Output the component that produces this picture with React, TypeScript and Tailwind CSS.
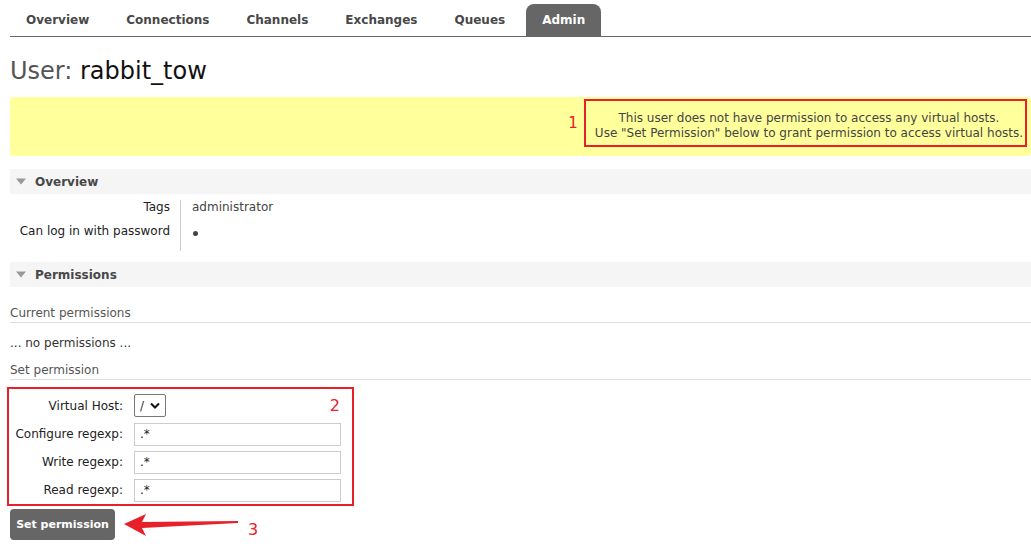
import React from 'react';

const tabs = ['Overview', 'Connections', 'Channels', 'Exchanges', 'Queues', 'Admin'];

function SectionHeader({ title }: { title: string }) {
  return (
    <div className="flex h-[25px] items-center bg-[#f5f5f5] pl-[6px]">
      <svg width="10" height="7" viewBox="0 0 10 7" className="mr-[9px]">
        <path d="M0 0.5 L10 0.5 L5 6.5 Z" fill="#999" />
      </svg>
      <span className="font-bold text-[#484848]">{title}</span>
    </div>
  );
}

function FormRow({ label, first, children }: { label: string; first?: boolean; children: React.ReactNode }) {
  return (
    <div className={`flex items-center ${first ? 'h-[29px]' : 'h-[28px]'}`}>
      <label className="w-[124px] shrink-0 whitespace-nowrap pr-[11px] text-right text-[#222]">{label}</label>
      {children}
    </div>
  );
}

export default function App() {
  return (
    <div className="min-h-screen bg-white pl-[10px] text-[12px] leading-[14px] text-[#333] font-['DejaVu_Sans',Verdana,sans-serif]">
      {/* Tabs */}
      <div className="flex border-b border-[#666] pt-[4px]">
        {tabs.map((t) => (
          <div
            key={t}
            className={`mr-[5px] flex h-[32px] items-center px-[16px] font-bold ${
              t === 'Admin' ? 'rounded-t-[8px] bg-[#666] text-white' : 'text-[#484848]'
            }`}
          >
            {t}
          </div>
        ))}
      </div>

      {/* Title */}
      <h1 className="mt-[20px] text-[24px] leading-[28px] text-[#555]">
        User: <span className="text-[#111]">rabbit_tow</span>
      </h1>

      {/* Warning */}
      <div className="mt-[12px] flex justify-end rounded-[4px] bg-[#ffff9c] pr-[4px] pt-[2px] pb-[9px]">
        <span className="mr-[6px] self-center text-[15px] text-[#e8202a]">1</span>
        <div className="border-2 border-[#e8202a] pl-[9px] pr-[2px] pt-[10px] pb-[4px] text-center leading-[15px] text-[#444]">
          This user does not have permission to access any virtual hosts.
          <br />
          Use "Set Permission" below to grant permission to access virtual hosts.
        </div>
      </div>

      {/* Overview */}
      <div className="mt-[13px]">
        <SectionHeader title="Overview" />
        <div className="mt-[6px] flex">
          <div className="w-[171px] border-r border-[#ccc] pr-[10px] text-right text-[#222]">
            <div className="h-[24px]">Tags</div>
            <div className="h-[27px]">Can log in with password</div>
          </div>
          <div className="pl-[11px] text-[#444]">
            <div className="h-[24px]">administrator</div>
            <div className="h-[27px] pt-[7px] pl-[1px]">
              <div className="h-[5px] w-[5px] rounded-full bg-[#444]" />
            </div>
          </div>
        </div>
      </div>

      {/* Permissions */}
      <div className="mt-[11px]">
        <SectionHeader title="Permissions" />
        <div className="mt-[19px] border-b border-[#ddd] pb-[2px] text-[#555]">Current permissions</div>
        <div className="mt-[13px] text-[#333]">... no permissions ...</div>
        <div className="mt-[13px] border-b border-[#ddd] pb-[2px] text-[#555]">Set permission</div>

        <div className="relative -ml-[3px] mt-[7px] w-[347px] border-2 border-[#e8202a] pl-[1px] pt-[2px]">
          <span className="absolute right-[12px] top-[8px] text-[16px] leading-[18px] text-[#e8202a]">2</span>
          <FormRow label="Virtual Host:" first>
            <div className="flex h-[23px] w-[32px] items-center justify-between rounded-[2px] border border-[#777] px-[5px]">
              <span className="text-[#333]">/</span>
              <svg width="10" height="7" viewBox="0 0 10 7">
                <path d="M1 1.5 L5 5.5 L9 1.5" stroke="#111" strokeWidth="2" fill="none" />
              </svg>
            </div>
          </FormRow>
          <FormRow label="Configure regexp:">
            <div className="flex h-[23px] w-[207px] items-center border border-[#ccc] px-[5px] text-[#222]">.*</div>
          </FormRow>
          <FormRow label="Write regexp:">
            <div className="flex h-[23px] w-[207px] items-center border border-[#ccc] px-[5px] text-[#222]">.*</div>
          </FormRow>
          <FormRow label="Read regexp:">
            <div className="flex h-[23px] w-[207px] items-center border border-[#ccc] px-[5px] text-[#222]">.*</div>
          </FormRow>
        </div>

        <div className="mt-[3px] flex items-center">
          <button
            type="button"
            className="flex h-[31px] w-[105px] items-center justify-center rounded-[4px] bg-[#666] text-[11px] font-bold text-white"
          >
            Set permission
          </button>
          <svg width="116" height="24" viewBox="0 0 116 24" className="ml-[8px] mt-[2px]">
            <path d="M1 10 L23 0 L19 8 L115 7 L115 9 L19 14 L23 22 Z" fill="#e8202a" />
          </svg>
          <span className="ml-[9px] mt-[10px] text-[16px] text-[#e8202a]">3</span>
        </div>
      </div>
    </div>
  );
}
